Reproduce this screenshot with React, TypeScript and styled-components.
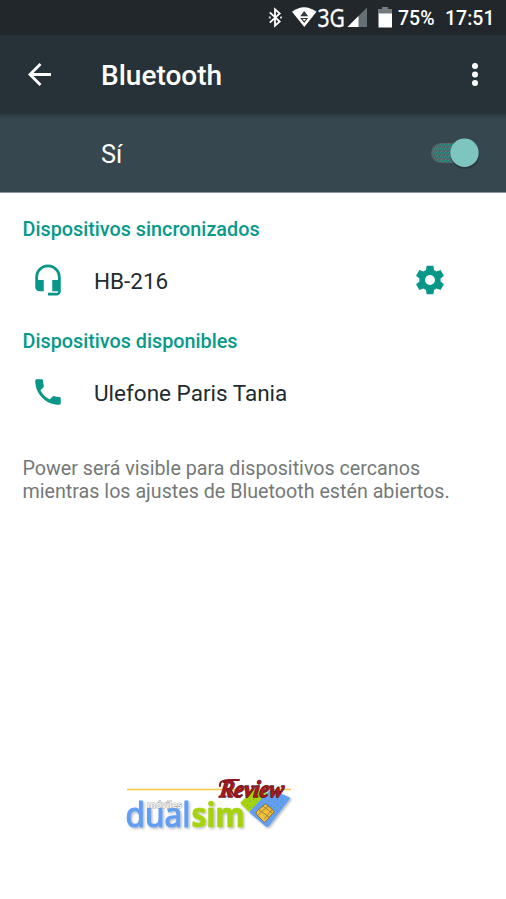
import React from 'react';
import styled, { createGlobalStyle } from 'styled-components';

const Global = createGlobalStyle`
  *{box-sizing:border-box}
  body{margin:0;background:#fff;font-family:Roboto,sans-serif;overflow:hidden}
  svg{display:block;flex:none}
`;
const Screen = styled.main`
  width:506px;height:899px;background:#fff;display:flex;flex-direction:column;
`;
const StatusBar = styled.header`
  height:35px;background:#21272b;color:#fff;display:flex;align-items:center;padding-left:266px;
`;
const StatusText = styled.span<{ $width: number; $gap?: number }>`
  width:${p => p.$width}px;margin-left:${p => p.$gap || 0}px;
  font-size:19.5px;font-weight:500;line-height:35px;padding-top:2px;white-space:nowrap;
`;
const AppBar = styled.div`
  height:79px;background:#273238;color:#fff;display:flex;align-items:center;padding:0 11px 0 20px;
`;
const Title = styled.h1`
  margin:3px 0 0 41px;flex:1;font-size:28px;font-weight:500;line-height:36px;
`;
const SwitchBar = styled.div`
  height:79px;background:linear-gradient(#2d3a41 0,#34434b 4px,#37474f 5px);
  border-bottom:1px solid #88959a;color:#fff;display:flex;align-items:center;padding:0 25px 0 101px;
`;
const SwitchLabel = styled.span`
  flex:1;font-size:25.3px;line-height:34px;padding-top:3px;
`;
const List = styled.section`
  display:flex;flex-direction:column;padding:20px 22px 0;
`;
const Category = styled.h2`
  margin:0;height:33px;padding-left:.5px;font-size:19.8px;line-height:34px;font-weight:500;color:#079a8b;
`;
const DeviceRow = styled.div`
  height:79px;display:flex;align-items:center;color:#212b30;padding:0 37px 11px 9px;
`;
const DeviceName = styled.span`
  flex:1;margin-left:29px;font-size:22.5px;line-height:30px;padding-top:2px;
`;
const Hint = styled.p`
  margin:20px 0 0;padding-left:.5px;font-size:19.7px;line-height:23px;color:#747978;white-space:nowrap;
`;
const Brand = styled.footer`
  margin-top:auto;padding:0 0 54px 122px;
`;

const Material = ({ d, size = 34 }: { d: string; size?: number }) => (
  <svg width={size} height={size} viewBox="0 0 24 24" fill="#079688"><path d={d} /></svg>
);

const headset = 'M12 1c-4.97 0-9 4.03-9 9v7c0 1.66 1.34 3 3 3h3v-8H5v-2c0-3.87 3.13-7 7-7s7 3.13 7 7v2h-4v8h4v1h-7v2h6c1.66 0 3-1.34 3-3V10c0-4.97-4.03-9-9-9z';
const phone = 'M6.62 10.79c1.44 2.83 3.76 5.14 6.59 6.59l2.2-2.2c.27-.27.67-.36 1.02-.24 1.12.37 2.33.57 3.57.57.55 0 1 .45 1 1V20c0 .55-.45 1-1 1-9.39 0-17-7.61-17-17 0-.55.45-1 1-1h3.5c.55 0 1 .45 1 1 0 1.25.2 2.45.57 3.57.11.35.03.74-.25 1.02l-2.2 2.2z';
const gear = 'M19.43 12.98c.04-.32.07-.64.07-.98s-.03-.66-.07-.98l2.11-1.65c.19-.15.24-.42.12-.64l-2-3.46c-.12-.22-.39-.3-.61-.22l-2.49 1c-.52-.4-1.08-.73-1.69-.98l-.38-2.65C14.46 2.18 14.25 2 14 2h-4c-.25 0-.46.18-.49.42l-.38 2.65c-.61.25-1.17.59-1.69.98l-2.49-1c-.23-.09-.49 0-.61.22l-2 3.46c-.13.22-.07.49.12.64l2.11 1.65c-.04.32-.07.65-.07.98s.03.66.07.98l-2.11 1.65c-.19.15-.24.42-.12.64l2 3.46c.12.22.39.3.61.22l2.49-1c.52.4 1.08.73 1.69.98l.38 2.65c.03.24.24.42.49.42h4c.25 0 .46-.18.49-.42l.38-2.65c.61-.25 1.17-.59 1.69-.98l2.49 1c.23.09.49 0 .61-.22l2-3.46c.12-.22.07-.49-.12-.64l-2.11-1.65zM12 15.5c-1.93 0-3.5-1.57-3.5-3.5s1.57-3.5 3.5-3.5 3.5 1.57 3.5 3.5-1.57 3.5-3.5 3.5z';

const StatusIcons = () => (
  <svg width="132" height="35" viewBox="266 0 132 35">
    <path d="M269.8 12.3l9.9 9.2-4.7 4.2V9.3l4.7 4.2-9.9 9.2" fill="none" stroke="#fff" strokeWidth="1.8" />
    <path d="M268.8 17.6h2M280 17.6h2" stroke="#c4d4d7" strokeWidth="2" />
    <path d="M292 11.8q12-9 24.5 0L304.3 27z" fill="#fff" />
    <path d="M304.2 11l4 5.3h-8zM304.2 23l4-5.1h-8z" fill="#323b40" />
    <path d="M304.2 19l1.7 0-1.7 2-1.7-2z" fill="#fff" />
    <text x="317.5" y="27" fontFamily="Noto Sans, sans-serif" fontSize="25" textLength="27.5" lengthAdjust="spacingAndGlyphs" fill="#fff" stroke="#fff" strokeWidth=".3">3G</text>
    <path d="M347.5 27L367 7.5V27z" fill="#657075" />
    <path d="M347.5 27l11-11v11z" fill="#fff" />
    <path d="M382 7h6v2h4v5h-14V9h4z" fill="#747b7e" />
    <path d="M378.5 13.5H392v14h-13.5z" fill="#fff" />
  </svg>
);

const Switch = () => (
  <svg width="52" height="36" viewBox="429 135 52 36">
    <defs>
      <pattern id="track" width="4" height="4" patternUnits="userSpaceOnUse">
        <rect width="4" height="4" fill="#53676a" /><path d="M0 0h1v1H0zM2 1h1v1H2zM1 3h1v1H1z" fill="#10a38f" />
      </pattern>
    </defs>
    <rect x="431" y="143" width="44" height="20" rx="10" fill="#586567" />
    <rect x="433" y="144" width="30" height="18" rx="9" fill="url(#track)" />
    <circle cx="465" cy="154.4" r="14.6" fill="#2b393f" />
    <circle cx="464.5" cy="152.7" r="14.2" fill="#7ec5c0" />
  </svg>
);

const Logo = () => (
  <svg width="174" height="79" viewBox="122 766 174 79">
    <defs>
      <filter id="shade" x="-10%" y="-20%" width="125%" height="150%"><feDropShadow dx="1.3" dy="1.3" stdDeviation=".8" floodOpacity=".3" /></filter>
      <pattern id="dots" width="6" height="6" patternUnits="userSpaceOnUse"><path d="M1 1h1v1H1zM4 3h1v1H4z" fill="#54998a" /></pattern>
    </defs>
    <path d="M127 789.5h164" stroke="#f3c742" strokeWidth="1.6" />
    <g filter="url(#shade)">
      <text x="125.5" y="827" textLength="65" lengthAdjust="spacingAndGlyphs" fontFamily="Noto Sans, sans-serif" fontSize="34" fontWeight="400" fill="#629ef2" stroke="#629ef2" strokeWidth="1.2" strokeLinejoin="round">dual</text>
      <text x="191.5" y="827" textLength="53" lengthAdjust="spacingAndGlyphs" fontFamily="Noto Sans, sans-serif" fontSize="34" fontWeight="700" fill="#a6d30c" stroke="#a6d30c" strokeWidth=".7" strokeLinejoin="round">sim</text>
      <path d="M241 804q-1-1 0-2l13-13 14 4-18 18q-1 1-2 0z" fill="#a6d30c" />
      <path d="M250 811l19-20q1-1 3-1l17 7q2 1 0 3l-20 26q-2 2-4 0l-14-12q-2-1-1-3z" fill="#629ef2" />
      <path d="M246 803l12-11 5 3-14 14zM273 795l13 5-10 15-12-9z" fill="url(#dots)" />
    </g>
    <path d="M256.5 811.5l8-7q1-1 2 0l7 6q1 1 0 2l-8 9q-1 1-2 0l-7-7q-1-1 0-3z" fill="#f0c03c" stroke="#836b32" />
    <path d="M259 810l10 7M263 806l9 7M258 815l10-9M264 819l8-9" stroke="#836b32" strokeWidth=".7" />
    <text x="147" y="808" textLength="35" lengthAdjust="spacingAndGlyphs" fontFamily="Noto Sans, sans-serif" fontSize="9.5" fontWeight="700" fill="#f2f2f2" stroke="#999" strokeWidth=".8" paintOrder="stroke">móviles</text>
    <g transform="translate(219 797) skewX(-8)">
      <text x="0" y="0" textLength="64" lengthAdjust="spacingAndGlyphs" fontFamily="Liberation Serif, serif" fontStyle="italic" fontWeight="700" fontSize="24" fill="#a51820" stroke="#5b1a1f" strokeWidth="1.4" strokeLinejoin="round" paintOrder="stroke">Review</text>
    </g>
    <path d="M220 786q-1-6 9-6h10M231 790q3 8 9 7" fill="none" stroke="#8d171d" strokeWidth="2" strokeLinecap="round" />
  </svg>
);

export default function App() {
  return (
    <Screen>
      <Global />
      <StatusBar>
        <StatusIcons />
        <StatusText $width={37}>75%</StatusText>
        <StatusText $width={50} $gap={10}>17:51</StatusText>
      </StatusBar>
      <AppBar>
        <svg width="40" height="40" viewBox="20 55 40 40" fill="none" stroke="#fff" strokeWidth="2.8"><path d="M51 74.5H30M40.5 64L30 74.5 40.5 85" /></svg>
        <Title>Bluetooth</Title>
        <svg width="40" height="40" viewBox="455 55 40 40" fill="#fff"><circle cx="475" cy="66" r="3" /><circle cx="475" cy="74.5" r="3" /><circle cx="475" cy="83" r="3" /></svg>
      </AppBar>
      <SwitchBar><SwitchLabel>Sí</SwitchLabel><Switch /></SwitchBar>
      <List>
        <Category>Dispositivos sincronizados</Category>
        <DeviceRow><Material d={headset} /><DeviceName>HB-216</DeviceName><Material d={gear} /></DeviceRow>
        <Category>Dispositivos disponibles</Category>
        <DeviceRow><Material d={phone} /><DeviceName>Ulefone Paris Tania</DeviceName></DeviceRow>
        <Hint>Power será visible para dispositivos cercanos<br />mientras los ajustes de Bluetooth estén abiertos.</Hint>
      </List>
      <Brand><Logo /></Brand>
    </Screen>
  );
}
